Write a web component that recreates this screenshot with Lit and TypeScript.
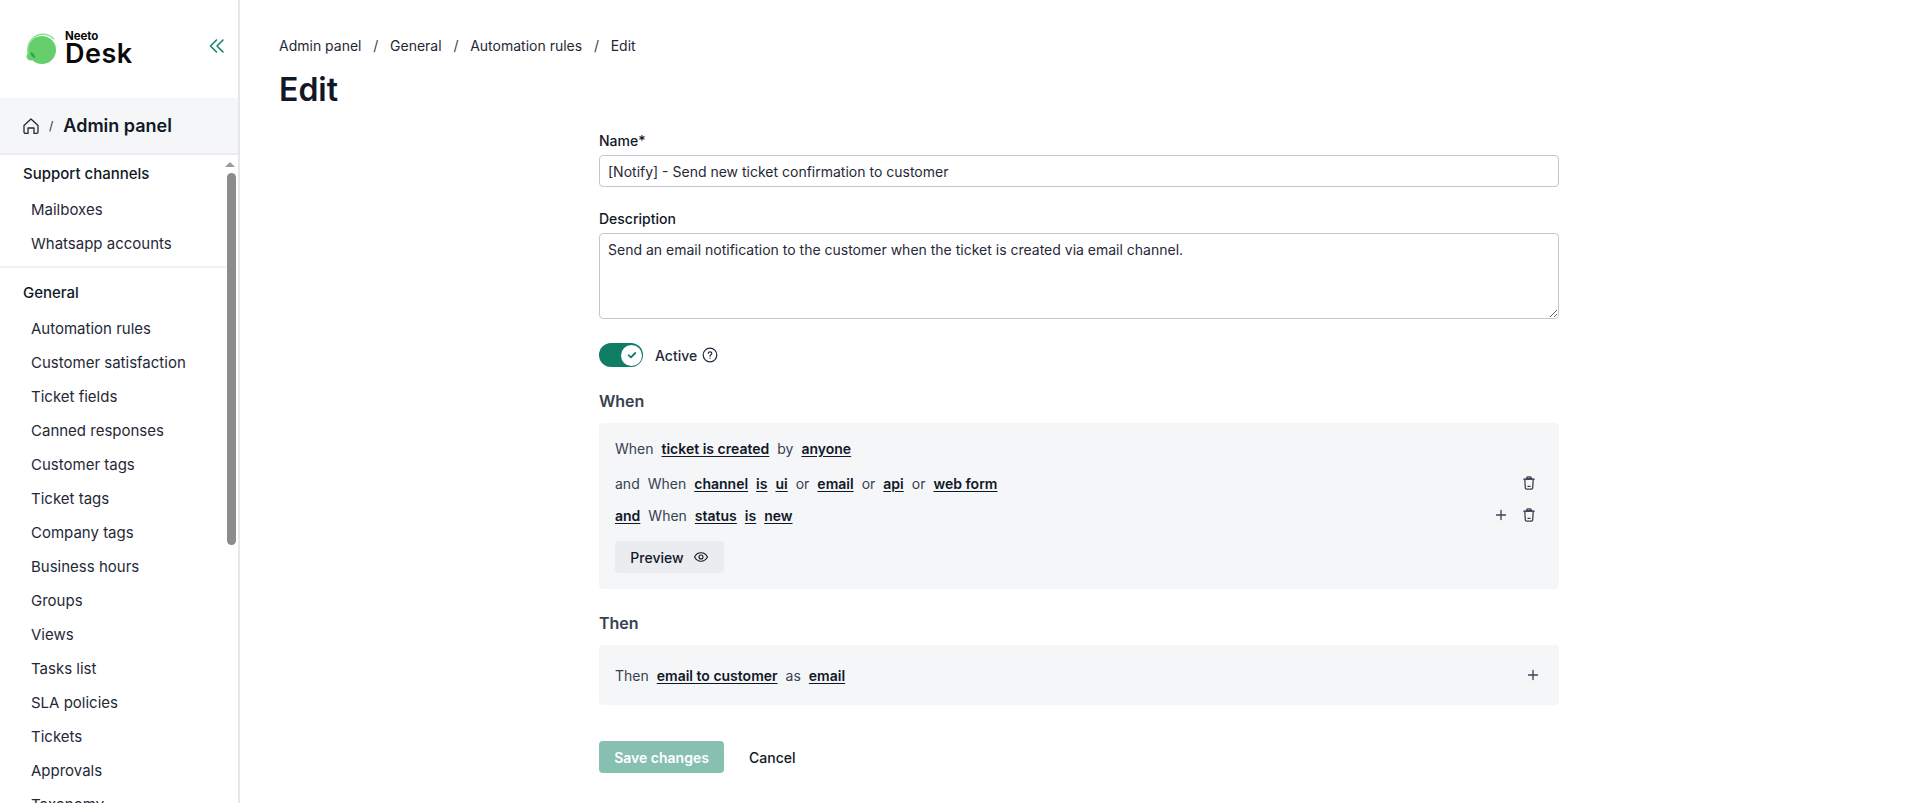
import { LitElement, html, css, svg } from "lit";
import { customElement } from "lit/decorators.js";

const trash = svg`<svg class="ic" width="16" height="16" viewBox="0 0 16 16" fill="none" stroke="currentColor" stroke-width="1.3" stroke-linecap="round" stroke-linejoin="round"><path d="M2.8 4.200h10.400M5.600 4l.5-1.700c.1-.3.3-.4.6-.4h2.600c.3 0 .5.1.6.4l.5 1.700"/><path d="M5.500 3.400h5v.8h-5z" fill="currentColor"/><path d="M3.800 4.200l.5 8.500c0 .8.600 1.400 1.300 1.400h4.800c.7 0 1.300-.6 1.300-1.400l.5-8.500M6.900 11.300h2.200"/></svg>`;
const plus = svg`<svg class="ic" width="16" height="16" viewBox="0 0 16 16" fill="none" stroke="currentColor" stroke-width="1.3" stroke-linecap="round"><path d="M8 3.500v9M3.500 8h9"/></svg>`;

const SUPPORT = ["Mailboxes", "Whatsapp accounts"];
const GENERAL = ["Automation rules", "Customer satisfaction", "Ticket fields", "Canned responses", "Customer tags", "Ticket tags", "Company tags", "Business hours", "Groups", "Views", "Tasks list", "SLA policies", "Tickets", "Approvals", "Taxonomy"];

@customElement("app-root")
export class AppRoot extends LitElement {
  static styles = css`
    :host { display: block; height: 803px; overflow: hidden; font-family: Inter, "Liberation Sans", sans-serif; color: #1f2937; background: #fff; }
    * { box-sizing: border-box; }
    .app { display: flex; height: 803px; }
    .side { width: 240px; flex: none; border-right: 2px solid #e5e7eb; display: flex; flex-direction: column; height: 100%; }
    .brand { height: 98px; flex: none; display: flex; align-items: center; justify-content: space-between; padding: 0 12px 0 25px; }
    .logo { display: flex; align-items: center; gap: 8px; margin-top: -1px; }
    .words { display: flex; flex-direction: column; color: #0a0a0a; }
    .neeto { font-size: 11.500px; font-weight: 700; line-height: 10px; letter-spacing: -0.1px; }
    .desk { font-size: 27px; font-weight: 600; line-height: 26px; letter-spacing: 0.5px; }
    .collapse { color: #0f7d64; display: block; margin-top: -6px; }
    .crumbhead { height: 57px; flex: none; background: #f5f6f8; border-bottom: 2px solid #ebecef; display: flex; align-items: center; padding: 0 23px; gap: 10px; }
    .crumbhead .sl { font-size: 12px; color: #1f2937; }
    .crumbhead b { font-size: 18px; font-weight: 600; color: #111827; }
    .nav { flex: 1; min-height: 0; overflow: hidden; position: relative; }
    .sec { padding: 0 0 0 23px; font-size: 15px; font-weight: 500; color: #111827; height: 20px; line-height: 20px; }
    .sec.first { margin-top: 9px; }
    .item { padding-left: 31px; font-size: 15px; line-height: 34px; height: 34px; color: #1f2937; }
    .list { margin-top: 9px; }
    .rule { height: 2px; background: #f0f1f3; margin: 5px 12px 15px 0; }
    .arrow { position: absolute; top: 7px; right: 3px; width: 0; height: 0; border-left: 5px solid transparent; border-right: 5px solid transparent; border-bottom: 5px solid #9a9a9a; }
    .thumb { position: absolute; top: 18px; right: 2px; width: 9px; height: 372px; border-radius: 5px; background: #8c8c8c; }
    .main { flex: 1; min-width: 0; padding: 37px 39px 0; }
    .bc { display: flex; gap: 11.750px; font-size: 14px; line-height: 18px; color: #1f2937; }
    .bc i { font-style: normal; color: #374151; }
    h1 { margin: 17px 0 0; font-size: 32px; line-height: 36px; font-weight: 600; color: #111827; }
    .form { width: 960px; margin: 23px auto 0; margin-left: 320px; }
    label.lb { display: block; font-size: 14px; font-weight: 500; line-height: 20px; color: #111827; margin-bottom: 4px; }
    input, textarea { display: block; width: 100%; font: 14px/20px Inter, sans-serif; color: #1f2937; border: 1px solid #c3c7cd; border-radius: 4px; padding: 0 8px; background: #fff; outline: none; }
    input { height: 32px; margin-bottom: 22px; }
    textarea { height: 86px; padding-top: 6px; resize: vertical; }
    .toggle-row { display: flex; align-items: center; margin-top: 24px; height: 24px; }
    .toggle { width: 44px; height: 24px; border-radius: 12px; background: #0f7d64; position: relative; flex: none; }
    .knob { position: absolute; right: 1px; top: 1.500px; width: 21px; height: 21px; border-radius: 50%; background: #fff; display: flex; align-items: center; justify-content: center; color: #0f7d64; }
    .active { font-size: 14px; font-weight: 500; margin-left: 12px; color: #1f2937; }
    .help { margin-left: 5px; color: #1f2937; display: block; }
    h2 { font-size: 16px; font-weight: 600; line-height: 24px; color: #374151; margin: 0; }
    .when { margin-top: 22px; }
    .then { margin-top: 22px; }
    .panel { margin-top: 10px; background: #f5f6f8; border-radius: 4px; padding: 16px; }
    .r { display: flex; align-items: center; font-size: 14px; color: #374151; gap: 8px; }
    .r u { font-weight: 600; color: #111827; text-underline-offset: 2px; }
    .r span, .r u { white-space: nowrap; }
    .r1 { height: 18px; margin-bottom: 10px; }
    .r2 { height: 32px; }
    .sp { flex: 1; }
    .ic { display: block; color: #374151; }
    .prev { margin-top: 10px; width: 109px; height: 32px; background: #ebecef; border-radius: 4px; display: flex; align-items: center; justify-content: center; gap: 9px; font-size: 14px; font-weight: 500; color: #111827; }
    .then-p { height: 60px; display: flex; align-items: center; padding: 0 16px; }
    .then-p .r { flex: 1; }
    .then-p .ic { margin-right: 2px; }
    .acts { display: flex; align-items: center; margin-top: 36px; }
    .save { width: 125px; height: 32px; border-radius: 4px; background: #87bfb0; color: #fff; font-size: 14px; font-weight: 600; display: flex; align-items: center; justify-content: center; }
    .cancel { margin-left: 25px; font-size: 14px; font-weight: 500; color: #111827; }
    .right-ic { display: flex; align-items: center; gap: 12px; margin-right: 6px; }
  `;

  render() {
    return html`<div class="app">
      <aside class="side">
        <div class="brand">
          <div class="logo">
            <svg width="32" height="34" viewBox="0 0 32 34">
              <circle cx="17" cy="18" r="14" fill="#65cf6c"/>
              <path d="M2.800 21C1.500 10 9.500 1.600 19 2.300c4 .3 7 1.800 9.500 4.500" fill="none" stroke="#8fe094" stroke-width="1.500" stroke-linecap="round"/>
              <ellipse cx="6" cy="24.500" rx="4.500" ry="4" fill="#65cf6c"/>
              <path d="M5 20c3 .5 5.300 3 5.500 6.200-3-.4-5-2.900-5.500-6.200z" fill="#2fa84f"/>
            </svg>
            <div class="words"><span class="neeto">Neeto</span><span class="desk">Desk</span></div>
          </div>
          <svg class="collapse" width="18" height="18" viewBox="0 0 18 18" fill="none" stroke="currentColor" stroke-width="1.5" stroke-linecap="round" stroke-linejoin="round"><path d="M8.500 3 2.500 9l6 6M15 3 9 9l6 6"/></svg>
        </div>
        <div class="crumbhead">
          <svg width="16" height="18" viewBox="0 0 16 18" fill="none" stroke="#1f2937" stroke-width="1.300" stroke-linejoin="round"><path d="M1 8.500 8 2l7 6.500V15c0 .8-.6 1.400-1.400 1.400H11v-5.400H5v5.400H2.400C1.600 16.400 1 15.800 1 15z"/></svg>
          <span class="sl">/</span><b>Admin panel</b>
        </div>
        <nav class="nav">
          <div class="sec first">Support channels</div>
          <div class="list">${SUPPORT.map((s) => html`<div class="item">${s}</div>`)}</div>
          <div class="rule"></div>
          <div class="sec">General</div>
          <div class="list">${GENERAL.map((s) => html`<div class="item">${s}</div>`)}</div>
          <div class="arrow"></div>
          <div class="thumb"></div>
        </nav>
      </aside>
      <main class="main">
        <div class="bc"><span>Admin panel</span><i>/</i><span>General</span><i>/</i><span>Automation rules</span><i>/</i><span>Edit</span></div>
        <h1>Edit</h1>
        <div class="form">
          <label class="lb">Name*</label>
          <input value="[Notify] - Send new ticket confirmation to customer" />
          <label class="lb">Description</label>
          <textarea>Send an email notification to the customer when the ticket is created via email channel.</textarea>
          <div class="toggle-row">
            <div class="toggle"><div class="knob"><svg width="12" height="12" viewBox="0 0 12 12" fill="none" stroke="currentColor" stroke-width="1.800" stroke-linecap="round" stroke-linejoin="round"><path d="M2.800 6.300 5 8.300 9.200 4"/></svg></div></div>
            <span class="active">Active</span>
            <svg class="help" width="16" height="16" viewBox="0 0 16 16" fill="none" stroke="currentColor" stroke-width="1.200" stroke-linecap="round"><circle cx="8" cy="8" r="6.800"/><path d="M6.200 6.300C6.300 5.300 7 4.800 8 4.800c1 0 1.800.6 1.800 1.500 0 1.400-1.800 1.400-1.800 2.900"/><path d="M8 11.200v.1"/></svg>
          </div>
          <h2 class="when">When</h2>
          <div class="panel">
            <div class="r r1"><span>When</span><u>ticket is created</u><span>by</span><u>anyone</u></div>
            <div class="r r2"><span>and</span><span>When</span><u>channel</u><u>is</u><u>ui</u><span>or</span><u>email</u><span>or</span><u>api</u><span>or</span><u>web form</u><div class="sp"></div><div class="right-ic">${trash}</div></div>
            <div class="r r2"><u>and</u><span>When</span><u>status</u><u>is</u><u>new</u><div class="sp"></div><div class="right-ic">${plus}${trash}</div></div>
            <div class="prev">Preview<svg width="16" height="16" viewBox="0 0 16 16" fill="none" stroke="currentColor" stroke-width="1.100"><path d="M1.500 8C3 5.200 5.300 3.800 8 3.800s5 1.400 6.500 4.200c-1.500 2.800-3.800 4.200-6.500 4.200S3 10.800 1.500 8z"/><circle cx="8" cy="8" r="2"/></svg></div>
          </div>
          <h2 class="then">Then</h2>
          <div class="panel then-p">
            <div class="r"><span>Then</span><u>email to customer</u><span>as</span><u>email</u></div>
            ${plus}
          </div>
          <div class="acts"><div class="save">Save changes</div><div class="cancel">Cancel</div></div>
        </div>
      </main>
    </div>`;
  }
}
